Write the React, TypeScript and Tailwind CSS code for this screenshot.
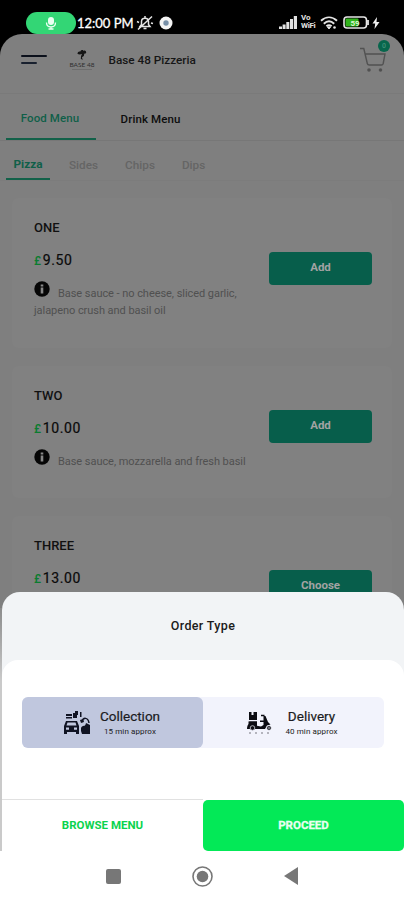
import type { ReactNode } from "react"

const items = [
  {
    name: "ONE",
    price: "9.50",
    action: "Add",
    lines: ["Base sauce - no cheese, sliced garlic,", "jalapeno crush and basil oil"],
    card: "mt-[17px] h-[150px]",
    button: "mt-[34px]",
  },
  {
    name: "TWO",
    price: "10.00",
    action: "Add",
    lines: ["Base sauce, mozzarella and fresh basil"],
    card: "mt-[18px] h-[132px]",
    button: "mt-[24px]",
  },
  {
    name: "THREE",
    price: "13.00",
    action: "Choose",
    lines: [],
    card: "mt-[18px] h-[132px]",
    button: "mt-[34px]",
  },
]

function StatusBar() {
  return (
    <div className="h-[34px] shrink-0 flex items-start pt-3 pl-[26px] pr-6 text-white">
      <div className="w-[50px] h-[22px] rounded-full bg-[#33d675] flex items-center justify-center">
        <svg width="12" height="14" viewBox="0 0 12 14" fill="none">
          <rect x="3" y="1" width="6" height="8" rx="3" fill="#e9fff2" />
          <path d="M1.500 6.500c0 6 9 6 9 0M6 11v2M3.500 13h5" stroke="#e9fff2" strokeWidth="1.300" />
        </svg>
      </div>
      <span className="w-[60px] pl-px mt-px font-[Lato,sans-serif] text-[13px] leading-[20px] whitespace-nowrap [-webkit-text-stroke:0.3px_white]">12:00 PM</span>
      <svg className="mt-[3px]" width="18" height="16" viewBox="0 0 18 16" fill="none" stroke="#e5e5e5" strokeWidth="1.500">
        <path d="M4 11.500h10l-1.500-2V6.500c0-4.500-7-4.500-7 0v3zM7.500 13.500h3M2 14.500L16 1.500M1 6.500l2 1M15 8l2 .5M9 1v2" />
      </svg>
      <svg className="ml-[5px] mt-1" width="14" height="14" viewBox="0 0 14 14">
        <circle cx="7" cy="7" r="6.500" fill="#f4f4f4" />
        <circle cx="7" cy="7" r="2.700" fill="#7890a8" />
      </svg>
      <svg className="ml-auto mt-[4px]" width="18" height="13" viewBox="0 0 18 13" fill="#e2e2e2">
        <path d="M0 10.500h3v2.500H0zM3.600 8.500h3V13h-3zM7.300 6h3v7h-3zM11 3h3v10h-3zM14.800 0H18v13h-3.200z" />
      </svg>
      <div className="ml-1 mt-[2px] w-4 font-[Roboto,sans-serif] text-[8px] leading-[8px] font-bold text-[#e2e2e2]">
        <div>Vo</div>
        <div className="tracking-[-0.3px]">WiFi</div>
      </div>
      <svg className="ml-[3px] mt-[4px]" width="18" height="14" viewBox="0 0 18 14" fill="none" stroke="#e5e5e5" strokeWidth="1.900">
        <path d="M1 4.800c5-4.600 11-4.600 16 0M3.800 7.700c3.200-3 7.200-3 10.400 0M6.400 10.300c1.600-1.400 3.600-1.400 5.200 0" />
        <path d="M7.500 11h3L9 13z" fill="#e5e5e5" strokeWidth="1" />
        <circle cx="14.500" cy="11.500" r="1.300" fill="#e5e5e5" stroke="none" />
      </svg>
      <svg className="ml-[5px] mt-[4px]" width="27" height="13" viewBox="0 0 27 13">
        <rect x="1" y="1" width="22.500" height="11" rx="3" fill="none" stroke="#e5e5e5" strokeWidth="1.600" />
        <rect x="2.500" y="2.500" width="13" height="8" rx="1" fill="#32b41c" />
        <path d="M25 4v5" stroke="#e5e5e5" strokeWidth="1.800" />
        <text x="7.500" y="9.500" fontSize="8" fontWeight="700" fontFamily="Roboto" fill="#d9f4d1">59</text>
      </svg>
      <svg className="ml-[2px] mt-[5px]" width="8" height="12" viewBox="0 0 8 12" fill="#f0f0f0">
        <path d="M5 0L.5 6.500h2.700L2.500 12 7.500 5H4.500z" />
      </svg>
    </div>
  )
}

function Header() {
  return (
    <header className="h-[60px] shrink-0 flex items-center pl-[21px] pr-[14px] pb-2 border-b border-[#7a7a7a]">
      <div className="flex flex-col gap-[5px]">
        <div className="w-[26px] h-[2px] rounded bg-[#0b101b]" />
        <div className="w-[16px] h-[2px] rounded bg-[#18202e]" />
      </div>
      <div className="ml-[21px] w-[28px] flex flex-col items-center">
        <svg width="10" height="12" viewBox="0 0 11 12" fill="#151515">
          <path d="M1 3c1-1 2-1 2.500-.5C4 0 7 0 7 1.500 9 .5 10.500 2 10 4L8 4.500 7.500 7 5.500 8.500l.7 3-2-1.500.3-3L5.500 5 3 5.500.5 5z" />
        </svg>
        <div className="font-[Lato,sans-serif] text-[6.500px] leading-[6px] mt-px text-[#303030] whitespace-nowrap">BASE 48</div>
        <div className="w-5 h-px mt-px bg-[#6d6d6d]" />
      </div>
      <h1 className="ml-[12.500px] text-[11.750px] leading-4 font-medium text-[#161616]">Base 48 Pizzeria</h1>
      <div className="relative ml-auto mt-px w-[30px] h-[30px]">
        <svg className="mt-[2px]" width="27" height="27" viewBox="0 0 27 27" fill="none" stroke="#525252" strokeWidth="1.400">
          <path d="M0 1.500h3.800l3.500 15c.2.800.8 1.500 2 1.500h12.200c1 0 1.500-.7 1.700-1.500L25 7H5.200" />
          <circle cx="9" cy="23" r="1.100" fill="#454545" />
          <circle cx="20.500" cy="23" r="1.100" fill="#454545" />
        </svg>
        <span className="absolute -top-[5px] right-0 w-3 h-3 rounded-full bg-[#07664c] text-[#429078] text-[7px] leading-3 text-center font-medium">0</span>
      </div>
    </header>
  )
}

function Tabs() {
  return (
    <>
      <nav className="h-[47px] shrink-0 flex pl-1.5 border-b border-[#777] text-[11.500px] leading-4 font-medium">
        <div className="w-[90px] h-[46px] pt-4 pr-0.5 text-center border-b-2 border-[#126149] text-[#105f49] tracking-[0.1px]">Food Menu</div>
        <div className="w-[109px] pt-[17px] text-center text-[#0d0d0d] tracking-[0.1px]">Drink Menu</div>
      </nav>
      <nav className="h-[40px] shrink-0 flex pl-1.5 border-b border-[#7c7c7c] text-[11.750px] leading-4 font-medium text-[#656565]">
        <div className="w-[44px] h-[39px] pt-[15px] text-center font-bold border-b-2 border-[#126149] text-[#105f49]">Pizza</div>
        <div className="ml-[19px] pt-4">Sides</div>
        <div className="ml-[27px] pt-4">Chips</div>
        <div className="ml-[27px] pt-4">Dips</div>
      </nav>
    </>
  )
}

function MenuCard({ item }: { item: (typeof items)[number] }) {
  return (
    <article className={`mx-3 shrink-0 pl-[22px] pr-5 pt-5 rounded-md bg-[#818181] flex items-start justify-between ${item.card}`}>
      <div>
        <h2 className="text-[13px] leading-[20px] font-medium text-[#111]">{item.name}</h2>
        <p className="mt-3 text-[14px] leading-[20px] text-[#0a0a0a] tracking-[0.65px] [-webkit-text-stroke:0.2px_#0a0a0a]">
          <span className="text-[12px] font-medium text-[#0b7c30] [-webkit-text-stroke:0]">£</span>
          <span className="ml-px">{item.price}</span>
        </p>
        {item.lines.length > 0 && (
          <div className="mt-[10px] text-[11px] leading-[17px] text-[#505050] whitespace-nowrap tracking-[-0.05px]">
            <div className="flex">
              <svg width="16" height="16" viewBox="0 0 16 16">
                <circle cx="8" cy="8" r="7.700" fill="#060606" />
                <path d="M6.700 3.500h2.600v2H6.700zM6.700 6.500h2.600v6H6.700z" fill="#888" />
              </svg>
              <span className="ml-[8px] mt-[4px]">{item.lines[0]}</span>
            </div>
            {item.lines[1] && <div>{item.lines[1]}</div>}
          </div>
        )}
      </div>
      <button className={`w-[103px] h-[33px] pb-0.5 rounded-[4px] bg-[#075e4b] text-[11.500px] font-bold text-[#a3a3a3] ${item.button}`}>{item.action}</button>
    </article>
  )
}

function OrderOption({ icon, title, note, className }: { icon: ReactNode; title: string; note: string; className: string }) {
  return (
    <button className={`h-[51px] pr-[2px] flex items-center justify-center rounded-md text-[#1b1b22] ${className}`}>
      {icon}
      <span className="flex flex-col items-center pb-px">
        <span className="text-[13.500px] leading-[16px] [-webkit-text-stroke:0.2px_#1b1b22]">{title}</span>
        <span className="mt-[3px] text-[8px] leading-[9px] tracking-[0.1px]">{note}</span>
      </span>
    </button>
  )
}

// car parked in front of the shop, with a hand holding the bag
const collectionIcon = (
  <svg className="mr-[9px]" width="28" height="26" viewBox="0 0 28 26" fill="#101323">
    <path d="M3 4h6v2H3zM10 3h4v5h-4zM3 7h6v1.500H3zM12 1h3v4h-3zM17 2h1.500v5H17z" />
    <path fillRule="evenodd" d="M3 11h11l2 5v8h-3v-2H4v2H1v-8zM4.500 12.500l-1 3h10l-1-3zM3 17.500v2.300h3v-2.300zM11 17.500v2.300h3v-2.300z" />
    <path d="M19 12c1-5 6-5 7 1" fill="none" stroke="#101323" strokeWidth="1.500" />
    <path d="M18 18c2-4 4 0 5-5l4 2v9h-8l-1-3z" />
    <path d="M17 10l3-1 1 3-3 1z" />
  </svg>
)

const deliveryIcon = (
  <svg className="mr-[12px]" width="26" height="24" viewBox="0 0 26 24" fill="#0c0c12">
    <path d="M2 1h2.500v3h2V1H10v8H2z" />
    <path d="M1.500 10.500H10v3.500c0 2 1.500 2.500 4 2.500" />
    <path d="M1.500 10.500H10V15l4 .5 2.500-1.500V11H13V9.500h3.500V5h2l2.500 6 2.500 2.500-3.500 1-2 3.500H8a3 3 0 0 1-5 0H0c0-2 .5-4 1.500-5z" />
    <path d="M14 4.500h3.500" stroke="#0c0c12" strokeWidth="1.500" />
    <path d="M11.200 6v7.500l3 .5v-3h-2V6z" fill="#f2f3fc" />
    <circle cx="5.500" cy="17" r="2.300" stroke="#f2f3fc" strokeWidth=".7" />
    <circle cx="22" cy="17" r="2.300" stroke="#f2f3fc" strokeWidth=".7" />
    <circle cx="22" cy="17" r=".8" fill="#f2f3fc" />
    <path d="M2 22h2M8 22h2M14 22h2M20 22h2" stroke="#77777f" strokeWidth="1.200" />
  </svg>
)

function OrderSheet() {
  return (
    <section className="absolute inset-x-0 bottom-[49px] h-[259px] flex">
      <div className="w-[2px] shrink-0 mt-4 bg-gradient-to-b from-[#8c8c8c] to-[#cacaca] to-30%" />
      <div className="flex-1 flex flex-col rounded-t-[18px] bg-[#f2f4f6] overflow-hidden">
        <h2 className="h-[68px] shrink-0 flex items-center justify-center text-[12.500px] font-medium tracking-[0.35px] text-[#1b1b1b]">Order Type</h2>
        <div className="flex-1 rounded-t-[16px] bg-white flex flex-col">
          <div className="mt-[37px] mx-5 flex rounded-md bg-[#f2f3fc]">
            <OrderOption icon={collectionIcon} title="Collection" note="15 min approx" className="w-[181px] bg-[#c0c7de]" />
            <OrderOption icon={deliveryIcon} title="Delivery" note="40 min approx" className="flex-1" />
          </div>
          <div className="mt-auto h-[52px] flex text-[11.500px]">
            <button className="w-[201px] border-t border-[#e1e1e1] font-bold text-[#0bd34e]">BROWSE MENU</button>
            <button className="flex-1 mt-px rounded-[5px] bg-[#03e957] font-bold text-[#e8ffef] [-webkit-text-stroke:0.3px_#e8ffef]">PROCEED</button>
          </div>
        </div>
      </div>
    </section>
  )
}

function NavigationBar() {
  return (
    <div className="absolute inset-x-0 bottom-0 h-[49px] pt-px bg-white flex items-center pl-[106px]">
      <div className="w-[15px] h-[15px] rounded-[2px] bg-[#777]" />
      <svg className="ml-[71px]" width="21" height="21" viewBox="0 0 21 21">
        <circle cx="10.500" cy="10.500" r="9.500" fill="none" stroke="#777" strokeWidth="1.600" />
        <circle cx="10.500" cy="10.500" r="5.800" fill="#777" />
      </svg>
      <svg className="ml-[71px]" width="14" height="18" viewBox="0 0 14 18" fill="#777">
        <path d="M14 0v18L0 9z" />
      </svg>
    </div>
  )
}

export default function App() {
  return (
    <div className="relative w-[404px] h-[900px] overflow-hidden bg-black flex flex-col font-[Roboto,sans-serif]">
      <StatusBar />
      <main className="flex-1 min-h-0 flex flex-col overflow-hidden rounded-t-[22px] bg-[#7f7f7f]">
        <Header />
        <Tabs />
        {items.map((item) => (
          <MenuCard key={item.name} item={item} />
        ))}
      </main>
      <OrderSheet />
      <NavigationBar />
    </div>
  )
}
